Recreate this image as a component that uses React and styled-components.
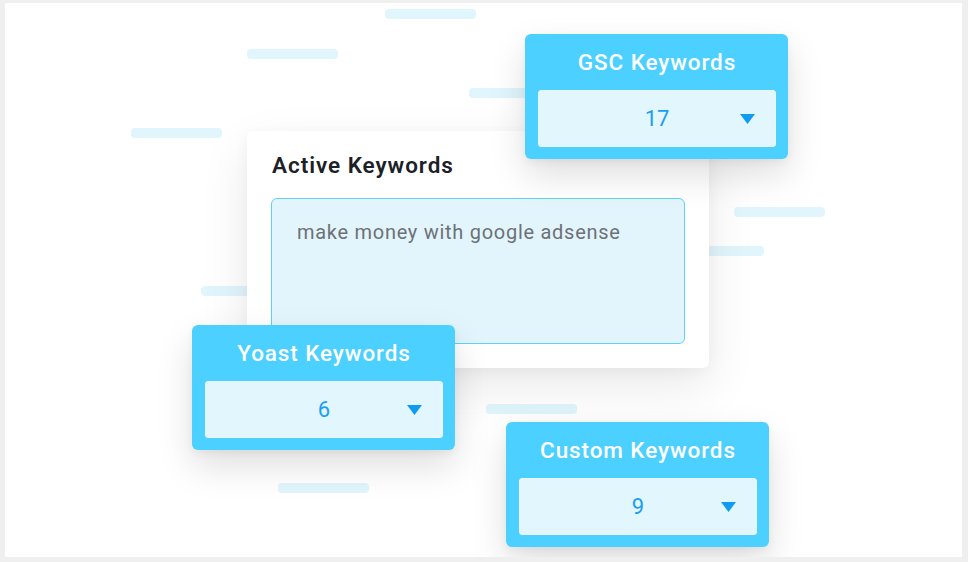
import React from "react";
import styled, { createGlobalStyle } from "styled-components";

const Global = createGlobalStyle`
  html, body { margin: 0; padding: 0; background: #efefef; }
  body { font-family: Roboto, "Noto Sans", sans-serif; }
`;

const Frame = styled.div`
  width: 968px;
  height: 562px;
  box-sizing: border-box;
  padding: 3px 6px 5px 5px;
  background: #efefef;
`;

const Canvas = styled.div`
  position: relative;
  width: 100%;
  height: 100%;
  background: #ffffff;
  overflow: hidden;
`;

const Bar = styled.div`
  position: absolute;
  width: 91px;
  height: 10px;
  border-radius: 4px;
  background: #e1f5fd;
`;

const ActiveCard = styled.div`
  position: absolute;
  left: 242px;
  top: 128px;
  width: 462px;
  height: 237px;
  box-sizing: border-box;
  padding: 18px 24px 24px 24px;
  background: #ffffff;
  border-radius: 6px;
  box-shadow: 0 18px 50px rgba(0, 0, 0, 0.09), 0 4px 14px rgba(0, 0, 0, 0.04);
  display: flex;
  flex-direction: column;
  gap: 17px;
`;

const ActiveTitle = styled.h2`
  margin: 0 0 0 1px;
  font-size: 22.5px;
  line-height: 32px;
  font-weight: 600;
  color: #1b2126;
  letter-spacing: 0.95px;
`;

const TextBox = styled.div`
  flex: 1;
  box-sizing: border-box;
  padding: 20px 25px;
  background: #e2f5fd;
  border: 1px solid #5fd2fb;
  border-radius: 6px;
  font-size: 20px;
  line-height: 26px;
  color: #6d7176;
  letter-spacing: 0.72px;
`;

const KeyCard = styled.div`
  position: absolute;
  width: 263px;
  height: 125px;
  box-sizing: border-box;
  padding: 0 12px 12px 13px;
  background: #4bd0ff;
  border-radius: 6px;
  box-shadow: 0 16px 36px rgba(0, 0, 0, 0.13), 0 3px 8px rgba(0, 0, 0, 0.05);
  display: flex;
  flex-direction: column;
`;

const KeyTitle = styled.div`
  height: 56px;
  display: flex;
  align-items: center;
  justify-content: center;
  color: #ffffff;
  font-size: 22.5px;
  font-weight: 500;
  letter-spacing: 0.9px;
`;

const Select = styled.div`
  position: relative;
  flex: 1;
  display: flex;
  align-items: center;
  justify-content: center;
  background: #e2f6fd;
  border: 1px solid #ecf9fe;
  border-radius: 3px;
  color: #1a9ff3;
  font-size: 22px;
  font-weight: 400;
`;

const Caret = styled.svg`
  position: absolute;
  right: 20px;
  top: 50%;
  transform: translateY(-50%);
`;

const bars = [
  [380, 6],
  [242, 46],
  [464, 85],
  [126, 125],
  [729, 204],
  [668, 243],
  [196, 283],
  [481, 401],
  [273, 480],
];

function Keywords({ title, value, left, top }) {
  return (
    <KeyCard style={{ left, top }}>
      <KeyTitle>{title}</KeyTitle>
      <Select>
        {value}
        <Caret width="15" height="10" viewBox="0 0 15 10">
          <path d="M0 0 H15 L7.5 10 Z" fill="#0f9bf2" />
        </Caret>
      </Select>
    </KeyCard>
  );
}

export default function App() {
  return (
    <>
      <Global />
      <Frame>
        <Canvas>
          {bars.map(([l, t], i) => (
            <Bar key={i} style={{ left: l, top: t }} />
          ))}
          <ActiveCard>
            <ActiveTitle>Active Keywords</ActiveTitle>
            <TextBox>make money with google adsense</TextBox>
          </ActiveCard>
          <Keywords title="GSC Keywords" value="17" left={520} top={31} />
          <Keywords title="Yoast Keywords" value="6" left={187} top={322} />
          <Keywords title="Custom Keywords" value="9" left={501} top={419} />
        </Canvas>
      </Frame>
    </>
  );
}
